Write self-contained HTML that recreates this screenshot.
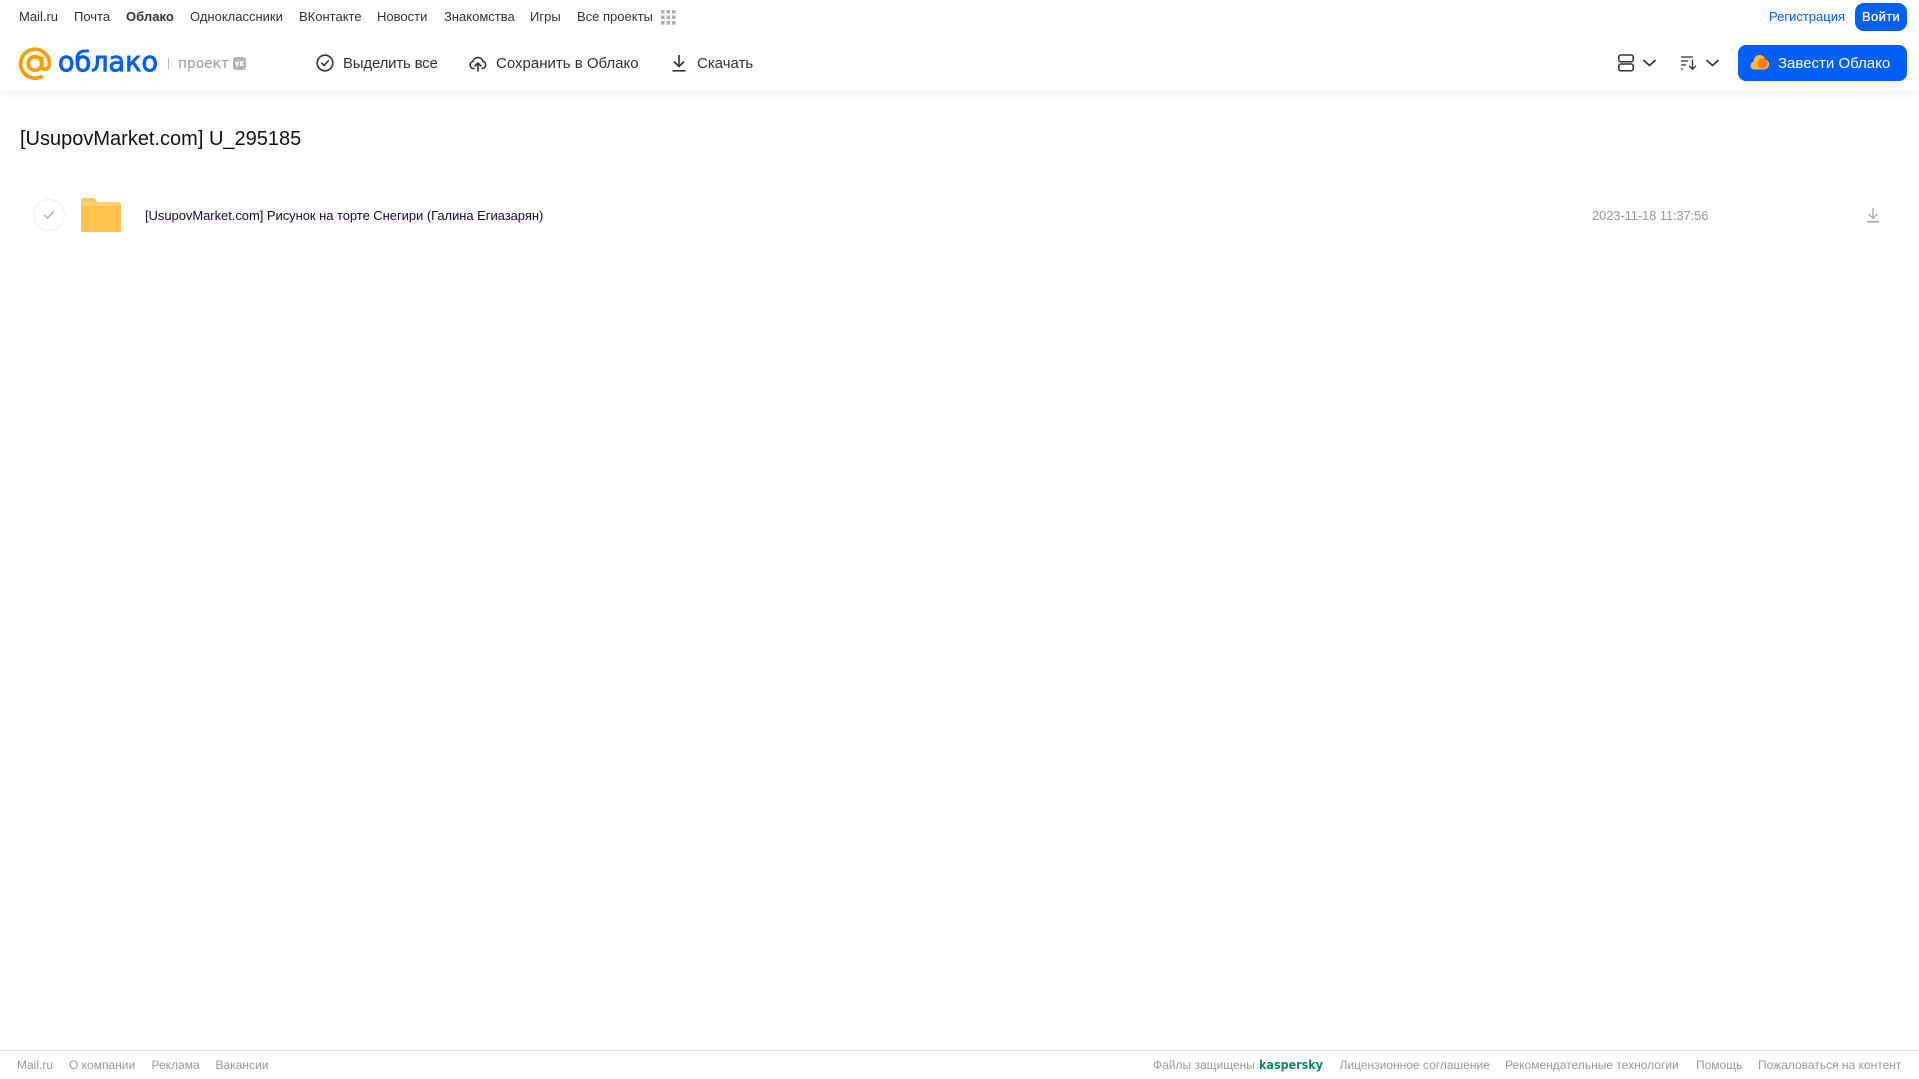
<!DOCTYPE html>
<html lang="ru"><head><meta charset="utf-8"><title>Облако</title>
<style>
html,body{margin:0;padding:0;width:1919px;height:1079px;overflow:hidden;background:#fff;font-family:"Liberation Sans",sans-serif}
.t{position:absolute;white-space:nowrap;line-height:18px}
.n{top:8px;font-size:13px;color:#333}
.b{top:55px;font-size:15px;color:#333;line-height:18px}
.f{top:1056px;font-size:12px;color:#999}
svg{position:absolute;overflow:visible}
</style></head><body>
<div style="position:absolute;left:0;top:0;width:1919px;height:91px;background:#fff;box-shadow:0 2px 10px rgba(0,0,0,.07)"></div>

<span class="t n" style="left:19px">Mail.ru</span>
<span class="t n" style="left:74px">Почта</span>
<span class="t n" style="left:126px;font-weight:bold;letter-spacing:.05px">Облако</span>
<span class="t n" style="left:190px">Одноклассники</span>
<span class="t n" style="left:299px">ВКонтакте</span>
<span class="t n" style="left:377px">Новости</span>
<span class="t n" style="left:444px">Знакомства</span>
<span class="t n" style="left:530px">Игры</span>
<span class="t n" style="left:577px">Все проекты</span>
<svg style="left:661px;top:10px" width="15" height="15" fill="#b0b0b0"><rect x="0" y="0" width="3.600" height="3.600"/><rect x="5.500" y="0" width="3.600" height="3.600"/><rect x="11" y="0" width="3.600" height="3.600"/><rect x="0" y="5.500" width="3.600" height="3.600"/><rect x="5.500" y="5.500" width="3.600" height="3.600"/><rect x="11" y="5.500" width="3.600" height="3.600"/><rect x="0" y="11" width="3.600" height="3.600"/><rect x="5.500" y="11" width="3.600" height="3.600"/><rect x="11" y="11" width="3.600" height="3.600"/></svg>
<span class="t n" style="left:1769px;color:#005ff9">Регистрация</span>
<div style="position:absolute;left:1855px;top:3px;width:52px;height:28px;border-radius:9px;background:#005ff9"></div>
<span class="t n" style="left:1862px;color:#fff;-webkit-text-stroke:.3px #fff;letter-spacing:.35px">Войти</span>

<svg style="left:19px;top:47px" width="33" height="33" viewBox="0 0 33 33" fill="none" stroke="#ff9e00" stroke-width="3.800"><circle cx="16" cy="16.500" r="6.800"/><path d="M22.800 9.700v9.300c0 4.800 7.600 4.800 7.600-2.500A14.400 14.400 0 1 0 23.500 29"/></svg>
<svg style="left:56px;top:44px" width="106" height="36"><text x="2" y="27" font-family="DejaVu Sans" font-size="28" fill="#005ff9" stroke="#005ff9" stroke-width=".9" textLength="100" lengthAdjust="spacingAndGlyphs">облако</text></svg>
<div style="position:absolute;left:168px;top:58px;width:1px;height:11px;background:#bbb"></div>
<svg style="left:176px;top:52px" width="56" height="22"><text x="2" y="16" font-family="DejaVu Sans" font-size="14" fill="#aaa" stroke="#aaa" stroke-width=".3" textLength="51" lengthAdjust="spacingAndGlyphs">проект</text></svg>
<div style="position:absolute;left:233px;top:57px;width:13px;height:13px;border-radius:3px;background:#b4b4b4"></div>
<svg style="left:233px;top:57px" width="13" height="13" fill="none" stroke="#fff" stroke-width="1.300"><path d="M2.500 4.500l1.500 4 1.500-4M7.500 4v5M10.500 4L8 6.500l2.500 2.500"/></svg>

<svg style="left:316px;top:54px" width="18" height="18" viewBox="0 0 18 18" fill="none" stroke="#333" stroke-width="1.600"><circle cx="9" cy="9" r="7.800"/><path d="M5.800 9.200l2.300 2.300 4.200-4.600" stroke-linecap="round" stroke-linejoin="round"/></svg>
<span class="t b" style="left:343px;letter-spacing:-.2px">Выделить все</span>
<svg style="left:469px;top:54px" width="18" height="18" viewBox="0 0 18 18" fill="none" stroke="#333" stroke-width="1.600" stroke-linecap="round" stroke-linejoin="round"><path d="M5 14.500H4.500A3.500 3.500 0 0 1 3.800 7.600 5.300 5.300 0 0 1 14 7.300a3.700 3.700 0 0 1-.5 7.200H13"/><path d="M9 17V9.500M6 12l3-3 3 3"/></svg>
<span class="t b" style="left:496px">Сохранить в Облако</span>
<svg style="left:671px;top:54px" width="16" height="18" viewBox="0 0 16 18" fill="none" stroke="#333" stroke-width="1.600"><path d="M8 1v11M3 7.500L8 12.500l5-5" stroke-linejoin="round"/><path d="M1.500 16.800h13"/></svg>
<span class="t b" style="left:697px">Скачать</span>

<svg style="left:1618px;top:54px" width="16" height="18" viewBox="0 0 16 18" fill="none" stroke="#333" stroke-width="1.500"><rect x=".8" y="1" width="14.400" height="6.800" rx="2"/><rect x=".8" y="10" width="14.400" height="6.800" rx="2"/></svg>
<svg style="left:1643px;top:59px" width="13" height="8" viewBox="0 0 13 8" fill="none" stroke="#333" stroke-width="1.700" stroke-linecap="round" stroke-linejoin="round"><path d="M1 1.500l5.500 5 5.500-5"/></svg>
<svg style="left:1681px;top:56px" width="17" height="14" viewBox="0 0 17 14" fill="none" stroke="#333" stroke-width="1.300"><path d="M0 1h12M0 5h7M0 9h5M0 13h2"/><path d="M11.500 3.500V13M8 9.800l3.500 3.400L15 9.800"/></svg>
<svg style="left:1706px;top:59px" width="13" height="8" viewBox="0 0 13 8" fill="none" stroke="#333" stroke-width="1.700" stroke-linecap="round" stroke-linejoin="round"><path d="M1 1.500l5.500 5 5.500-5"/></svg>

<div style="position:absolute;left:1738px;top:45px;width:169px;height:36px;border-radius:8px;background:#005ff9"></div>
<svg style="left:1750px;top:54px" width="20" height="16" viewBox="0 0 20 16"><path d="M4 15.500a3.800 3.800 0 0 1-.7-7.500C3.800 3.500 6.500 1 9.500 1c3 0 5 1.800 5.700 4.300A5.200 5.200 0 0 1 14.500 15.500z" fill="#ffb739"/><circle cx="12.500" cy="9.500" r="5" fill="#ff7a21"/></svg>
<span class="t b" style="left:1778px;color:#fff">Завести Облако</span>

<span class="t" style="left:20px;top:126px;font-size:20px;line-height:26px;color:#111">[UsupovMarket.com] U_295185</span>

<div style="position:absolute;left:33px;top:199px;width:30px;height:30px;border:1px solid #eee;border-radius:50%"></div>
<svg style="left:43px;top:210px" width="12" height="10" viewBox="0 0 12 10" fill="none" stroke="#aaa" stroke-width="1.300" stroke-linecap="round" stroke-linejoin="round"><path d="M1.500 5.200l3 3 6-6.500"/></svg>
<svg style="left:81px;top:198px" width="40" height="34" viewBox="0 0 40 34"><path d="M0 3a3 3 0 0 1 3-3h9c3 0 3 4 5 4h21a2 2 0 0 1 2 2v26a2 2 0 0 1-2 2H2a2 2 0 0 1-2-2z" fill="#ffcf76"/><path d="M0 8h40v24a2 2 0 0 1-2 2H2a2 2 0 0 1-2-2z" fill="#ffc04c"/><path d="M0 3a3 3 0 0 1 3-3h9c3 0 3 4 5 4H0z" fill="#ffc55e"/></svg>
<span class="t" style="left:145px;top:207px;font-size:13px;color:#1f0a2a;letter-spacing:-.05px">[UsupovMarket.com] Рисунок на торте Снегири (Галина Егиазарян)</span>
<span class="t" style="left:1592px;top:207px;font-size:13px;color:#999;letter-spacing:-.13px">2023-11-18 11:37:56</span>
<svg style="left:1866px;top:207px" width="14" height="16" viewBox="0 0 14 16" fill="none" stroke="#aaa" stroke-width="1.300"><path d="M7 1v10M2.500 6.800L7 11.300l4.500-4.500"/><path d="M1 14.800h12" stroke-width="1.600"/></svg>

<div style="position:absolute;left:0;top:1050px;width:1919px;height:1px;background:#ddd"></div>
<span class="t f" style="left:17px">Mail.ru</span>
<span class="t f" style="left:69px">О компании</span>
<span class="t f" style="left:151.500px">Реклама</span>
<span class="t f" style="left:215.500px">Вакансии</span>
<span class="t f" style="left:1153px">Файлы защищены</span>
<svg style="left:1258px;top:1056px" width="68" height="18"><text x="1" y="13" font-family="DejaVu Sans" font-size="12" font-weight="bold" fill="#0b8a70" textLength="64" lengthAdjust="spacingAndGlyphs">kaspersky</text></svg>
<span class="t f" style="left:1339.500px">Лицензионное соглашение</span>
<span class="t f" style="left:1505px">Рекомендательные технологии</span>
<span class="t f" style="left:1696px">Помощь</span>
<span class="t f" style="left:1758px">Пожаловаться на контент</span>
</body></html>
